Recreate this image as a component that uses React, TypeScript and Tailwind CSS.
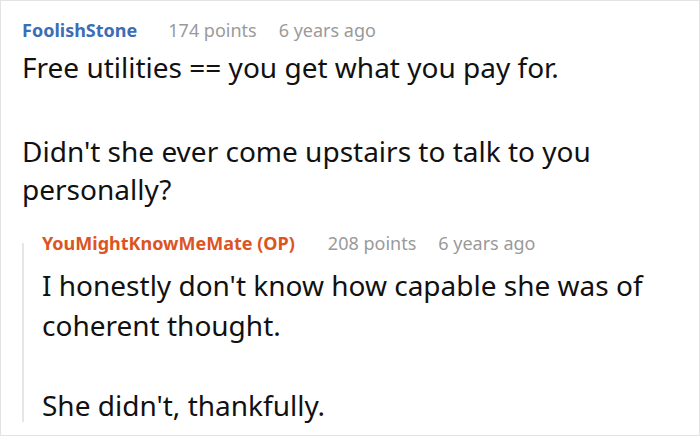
import React from "react";

const font = { fontFamily: '"Noto Sans", "Open Sans", sans-serif' };

function Header({ name, color, points, age, gap }: { name: string; color: string; points: string; age: string; gap: string }) {
  return (
    <div className="flex items-baseline text-[18px] leading-[24px] whitespace-nowrap">
      <span className={`font-bold ${color}`}>{name}</span>
      <span className={`${gap} text-[#9a9a9a]`}>{points}</span>
      <span className="ml-[22px] text-[#9a9a9a]">{age}</span>
    </div>
  );
}

export default function App() {
  return (
    <div style={font} className="w-[700px] h-[436px] overflow-hidden border border-[#e3e3e3] bg-white text-[#111]">
      <div className="pl-[21px] pt-[17px]">
        <Header name="FoolishStone" color="text-[#3c6db5]" points="174 points" age="6 years ago" gap="ml-[31px]" />
        <div className="text-[28px] leading-[38px] mt-[6px]">
          <p>Free utilities == you get what you pay for.</p>
          <p className="mt-[46px]">Didn't she ever come upstairs to talk to you personally?</p>
        </div>
        <div className="mt-[23px] flex">
          <div className="w-[2px] shrink-0 bg-[#e6e6e6] mt-[12px] mb-[3px]" />
          <div className="pl-[18px]">
            <Header name="YouMightKnowMeMate (OP)" color="text-[#dc5422]" points="208 points" age="6 years ago" gap="ml-[33px]" />
            <div className="text-[28px] leading-[40px] mt-[10px]">
              <p>I honestly don't know how capable she was of coherent thought.</p>
              <p className="mt-[40px]">She didn't, thankfully.</p>
            </div>
          </div>
        </div>
      </div>
    </div>
  );
}
